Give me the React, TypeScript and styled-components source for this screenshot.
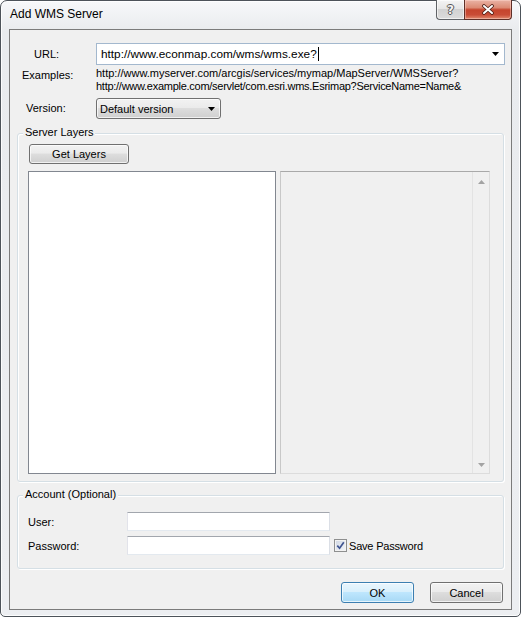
import React from 'react';
import styled, { createGlobalStyle } from 'styled-components';

const GlobalStyle = createGlobalStyle`
  html, body {
    margin: 0;
    padding: 0;
    background: #ffffff;
  }
  body {
    font-family: "Liberation Sans", Arial, sans-serif;
    font-size: 11px;
    color: #000000;
  }
  *, *::before, *::after {
    box-sizing: border-box;
  }
`;

const Window = styled.div`
  width: 521px;
  height: 617px;
  border: 1px solid #4d535a;
  border-radius: 7px 7px 5px 5px;
  background: linear-gradient(180deg, #f7f8fa 0%, #e9ebee 30px, #eceef1 100%);
  box-shadow: inset 0 0 0 1px rgba(255, 255, 255, 0.85);
  display: flex;
  flex-direction: column;
  padding: 0 8px 6px;
`;

const TitleBar = styled.div`
  height: 28px;
  display: flex;
  align-items: flex-start;
`;

const Title = styled.div`
  padding: 6px 0 0 1px;
  font-size: 12px;
  line-height: 14px;
  color: #000;
`;

const CaptionButtons = styled.div`
  margin-left: auto;
  margin-top: -1px;
  display: flex;
`;

const HelpButton = styled.div`
  width: 28px;
  height: 20px;
  border: 1px solid #5f6266;
  border-top: none;
  border-right: none;
  border-radius: 0 0 0 4px;
  background: linear-gradient(180deg, #f4f4f4 0%, #e6e6e6 45%, #d2d2d2 50%, #dcdcdc 100%);
  box-shadow: inset 0 0 0 1px rgba(255, 255, 255, 0.6);
  display: flex;
  align-items: center;
  justify-content: center;
  font-family: "DejaVu Sans", sans-serif;
  font-weight: bold;
  font-size: 12px;
  color: #f4f4f4;
  text-shadow: 1px 0 0 #555, -1px 0 0 #555, 0 1px 0 #555, 0 -1px 0 #555;
`;

const CloseButton = styled.div`
  width: 48px;
  height: 20px;
  border: 1px solid #5e2f27;
  border-top: none;
  border-radius: 0 0 4px 0;
  background: linear-gradient(180deg, #eab3a5 0%, #dc8b75 40%, #c5442d 52%, #c94c36 78%, #e08a6f 100%);
  box-shadow: inset 0 0 0 1px rgba(255, 220, 210, 0.45);
  display: flex;
  align-items: center;
  justify-content: center;
`;

const Client = styled.div`
  flex: 1;
  background: #f0f0f0;
  border: 1px solid #7b7b7b;
  display: flex;
  flex-direction: column;
  padding: 13px 0 6px;
`;

const FormRow = styled.div<{ $top: number; $align?: string }>`
  display: flex;
  align-items: ${p => p.$align ?? 'center'};
  margin-top: ${p => p.$top}px;
  padding-right: 6px;
`;

const FieldLabel = styled.span<{ $indent: number; $pad?: number }>`
  width: 86px;
  flex-shrink: 0;
  padding-left: ${p => p.$indent}px;
  padding-top: ${p => p.$pad ?? 0}px;
  line-height: 13px;
`;

const UrlCombo = styled.div`
  flex: 1;
  height: 22px;
  background: #ffffff;
  border: 1px solid #a3b8ce;
  display: flex;
  align-items: center;
  padding: 0 5px 0 4px;
  font-size: 11.8px;
`;

const UrlText = styled.span`
  flex: 1;
  white-space: nowrap;
`;

const Caret = styled.span`
  display: inline-block;
  width: 1px;
  height: 14px;
  margin-left: 1px;
  background: #000;
  vertical-align: -3px;
`;

const ExampleLines = styled.div`
  line-height: 13px;
  color: #000;
  white-space: nowrap;
`;

const ExampleLine = styled.div<{ $spacing?: number }>`
  letter-spacing: ${p => p.$spacing ?? 0}px;
`;

const VersionCombo = styled.div`
  width: 125px;
  height: 21px;
  border: 1px solid #707070;
  border-radius: 3px;
  background: linear-gradient(180deg, #f2f2f2 0%, #ebebeb 45%, #dddddd 50%, #cfcfcf 100%);
  box-shadow: inset 0 0 0 1px rgba(255, 255, 255, 0.7);
  display: flex;
  align-items: center;
  justify-content: space-between;
  padding: 0 5px 0 3px;
`;

const GroupBox = styled.section<{ $top: number; $padBottom: number }>`
  margin: ${p => p.$top}px 7px 0;
  border: 1px solid #d5dfe5;
  border-radius: 3px;
  box-shadow: inset 1px 1px 0 #ffffff, 1px 1px 0 #ffffff;
  display: flex;
  flex-direction: column;
  padding: 0 13px ${p => p.$padBottom}px 10px;
`;

const Legend = styled.div`
  align-self: flex-start;
  margin: -8px 0 0 -5px;
  padding: 0 2px;
  background: #f0f0f0;
  line-height: 13px;
`;

const PushButton = styled.button<{ $w: number; $h: number; $default?: boolean; $top?: number; $left?: number }>`
  width: ${p => p.$w}px;
  height: ${p => p.$h}px;
  margin: ${p => p.$top ?? 0}px 0 0 ${p => p.$left ?? 0}px;
  padding: 0;
  font-family: "Liberation Sans", Arial, sans-serif;
  font-size: 11px;
  color: #000;
  border: 1px solid ${p => (p.$default ? '#3c7fb1' : '#707070')};
  border-radius: 3px;
  background: ${p =>
    p.$default
      ? 'linear-gradient(180deg, #eaf6fd 0%, #d9f0fc 45%, #bee6fd 50%, #a7d9f5 100%)'
      : 'linear-gradient(180deg, #f2f2f2 0%, #ebebeb 45%, #dddddd 50%, #cfcfcf 100%)'};
  box-shadow: inset 0 0 0 1px rgba(255, 255, 255, 0.7);
  align-self: flex-start;
`;

const ListsRow = styled.div`
  display: flex;
  gap: 4px;
  margin-top: 7px;
  height: 303px;
`;

const LayerList = styled.div`
  width: 248px;
  background: #ffffff;
  border: 1px solid #828790;
`;

const InfoPanel = styled.div`
  width: 210px;
  background: #f0f0f0;
  border: 1px solid;
  border-color: #a9a9a9 #dcdcdc #dcdcdc #c8c8c8;
  display: flex;
  justify-content: flex-end;
`;

const ScrollTrack = styled.div`
  width: 17px;
  border-left: 1px solid #e3e3e3;
  background: #f0f0f0;
  display: flex;
  flex-direction: column;
  justify-content: space-between;
  align-items: center;
  padding: 8px 0 6px;
`;

const AccountRow = styled.div<{ $top: number }>`
  display: flex;
  align-items: center;
  margin-top: ${p => p.$top}px;
`;

const AccountLabel = styled.span`
  width: 99px;
  flex-shrink: 0;
`;

const TextBox = styled.div`
  width: 203px;
  height: 19px;
  background: #ffffff;
  border: 1px solid #abadb3;
  border-top-color: #a2a6ad;
  border-left-color: #e2e3ea;
  border-right-color: #dbdfe6;
  border-bottom-color: #e3e9ef;
`;

const CheckBox = styled.span`
  width: 13px;
  height: 13px;
  margin-left: 4px;
  border: 1px solid #8e8f8f;
  background: linear-gradient(135deg, #cfd6e2 0%, #f4f6f9 100%);
  box-shadow: inset 0 0 0 1px #f2f2f2;
  display: inline-flex;
  align-items: center;
  justify-content: center;
`;

const CheckText = styled.span`
  margin-left: 2px;
  letter-spacing: -0.2px;
`;

const ButtonBar = styled.div`
  display: flex;
  justify-content: flex-end;
  gap: 16px;
  margin-top: 13px;
  padding-right: 8px;
`;

const DropArrow = ({ color = '#000' }: { color?: string }) => (
  <svg width="7" height="4" viewBox="0 0 7 4">
    <path d="M0 0h7L3.5 4z" fill={color} />
  </svg>
);

const UpArrow = () => (
  <svg width="7" height="4" viewBox="0 0 7 4">
    <path d="M0 4h7L3.5 0z" fill="#a3a3a3" />
  </svg>
);

const CloseGlyph = () => (
  <svg width="14" height="11" viewBox="0 0 14 11">
    <path d="M3 2L11 9M11 2L3 9" stroke="#4a1d15" strokeWidth="3.6" strokeLinecap="round" />
    <path d="M3 2L11 9M11 2L3 9" stroke="#ffffff" strokeWidth="2" strokeLinecap="round" />
  </svg>
);

const CheckMark = () => (
  <svg width="9" height="9" viewBox="0 0 9 9">
    <path d="M1.3 4.6L3.6 7.2L7.8 1.3" fill="none" stroke="#3f5490" strokeWidth="1.7" />
  </svg>
);

const App = () => (
  <>
    <GlobalStyle />
    <Window>
      <TitleBar>
        <Title>Add WMS Server</Title>
        <CaptionButtons>
          <HelpButton>?</HelpButton>
          <CloseButton>
            <CloseGlyph />
          </CloseButton>
        </CaptionButtons>
      </TitleBar>

      <Client>
        <FormRow $top={0}>
          <FieldLabel $indent={24}>URL:</FieldLabel>
          <UrlCombo>
            <UrlText>
              http://www.econmap.com/wms/wms.exe?
              <Caret />
            </UrlText>
            <DropArrow />
          </UrlCombo>
        </FormRow>

        <FormRow $top={2} $align="flex-start">
          <FieldLabel $indent={12} $pad={2}>
            Examples:
          </FieldLabel>
          <ExampleLines>
            <ExampleLine>http://www.myserver.com/arcgis/services/mymap/MapServer/WMSServer?</ExampleLine>
            <ExampleLine $spacing={-0.27}>
              http://www.example.com/servlet/com.esri.wms.Esrimap?ServiceName=Name&amp;
            </ExampleLine>
          </ExampleLines>
        </FormRow>

        <FormRow $top={5}>
          <FieldLabel $indent={16}>Version:</FieldLabel>
          <VersionCombo>
            <span>Default version</span>
            <DropArrow />
          </VersionCombo>
        </FormRow>

        <GroupBox $top={14} $padBottom={7}>
          <Legend>Server Layers</Legend>
          <PushButton $w={100} $h={20} $top={5} $left={1}>
            Get Layers
          </PushButton>
          <ListsRow>
            <LayerList />
            <InfoPanel>
              <ScrollTrack>
                <UpArrow />
                <DropArrow color="#a3a3a3" />
              </ScrollTrack>
            </InfoPanel>
          </ListsRow>
        </GroupBox>

        <GroupBox $top={13} $padBottom={13}>
          <Legend>Account (Optional)</Legend>
          <AccountRow $top={11}>
            <AccountLabel>User:</AccountLabel>
            <TextBox />
          </AccountRow>
          <AccountRow $top={5}>
            <AccountLabel>Password:</AccountLabel>
            <TextBox />
            <CheckBox>
              <CheckMark />
            </CheckBox>
            <CheckText>Save Password</CheckText>
          </AccountRow>
        </GroupBox>

        <ButtonBar>
          <PushButton $w={73} $h={21} $default>
            OK
          </PushButton>
          <PushButton $w={73} $h={21}>
            Cancel
          </PushButton>
        </ButtonBar>
      </Client>
    </Window>
  </>
);

export default App;
